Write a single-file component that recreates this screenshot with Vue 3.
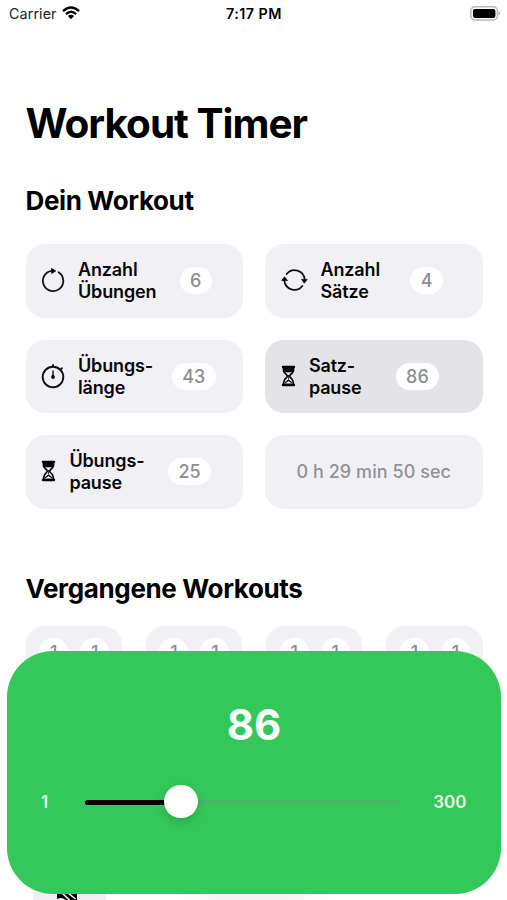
<script setup>
import { ref, computed } from 'vue'

const settings = [
  { id: 'exercises', icon: 'restart', lines: ['Anzahl', 'Übungen'], value: 6 },
  { id: 'sets', icon: 'cycle', lines: ['Anzahl', 'Sätze'], value: 4 },
  { id: 'length', icon: 'stopwatch', lines: ['Übungs-', 'länge'], value: 43 },
  { id: 'set-pause', icon: 'hourglass', lines: ['Satz-', 'pause'], value: 86, active: true },
  { id: 'exercise-pause', icon: 'hourglass', lines: ['Übungs-', 'pause'], value: 25 },
]
const history = [[1, 1], [1, 1], [1, 1], [1, 1]]
const min = 1
const max = 300
const value = ref(86)
const progress = computed(() => ((value.value - min) / (max - min)) * 100)
</script>

<template>
  <div class="screen">
    <header class="status">
      <div class="carrier">
        <span>Carrier</span>
        <svg class="wifi" width="18" height="14" viewBox="0 0 18 14">
          <path d="M1 5.2Q9-2.1 17 5.2M3.9 8.1Q9 3.5 14.1 8.1" fill="none" stroke="#000" stroke-width="2.3" />
          <path d="M5.9 10.1Q9 7.4 12.1 10.1L9 13.3z" />
        </svg>
      </div>
      <span class="time">7:17 PM</span>
      <svg class="battery" width="31" height="15" viewBox="0 0 31 15">
        <rect x=".8" y=".8" width="26.6" height="13.2" rx="4" fill="#fff" stroke="#b9b9b9" stroke-width="1.5" />
        <rect x="3" y="2.9" width="22.4" height="9" rx="2" />
        <path d="M28.6 5q2.8 2.4 0 4.8z" fill="#aaa" />
      </svg>
    </header>

    <main>
      <h1>Workout Timer</h1>
      <h2>Dein Workout</h2>
      <section class="grid">
        <article v-for="s in settings" :key="s.id" class="card" :class="[s.id, { active: s.active }]">
          <svg v-if="s.icon === 'restart'" class="icon" width="24" height="28" viewBox="0 0 24 28">
            <path d="M17.6 6.3A10.2 10.2 0 1 1 10.6 4.8" fill="none" stroke="#111" stroke-width="1.8" stroke-linecap="round" />
            <path d="M10.4 2.2 14.8 5 10.6 7.6z" stroke="#111" stroke-width=".7" stroke-linejoin="round" />
          </svg>
          <svg v-else-if="s.icon === 'cycle'" class="icon" width="27" height="28" viewBox="0 0 27 28">
            <path d="M5.6 8A10.2 10.2 0 0 1 23.7 13.6M21.4 20A10.2 10.2 0 0 1 3.3 14.4" fill="none" stroke="#111" stroke-width="1.8" stroke-linecap="round" />
            <path d="M.8 14.6 3.5 10.8 6.5 14.6zM20.5 13.4H26.2L23.4 17.2z" stroke="#111" stroke-width=".8" stroke-linejoin="round" />
          </svg>
          <svg v-else-if="s.icon === 'stopwatch'" class="icon" width="24" height="28" viewBox="0 0 24 28">
            <g fill="none" stroke="#111" stroke-width="1.9" stroke-linecap="round">
              <circle cx="12" cy="15" r="10.3" />
              <path d="M12 4.5V3M20 7.2 21 6.2" />
              <path d="M12 9V15" stroke-width="1.4" />
            </g>
            <circle cx="12" cy="15" r="1.9" />
          </svg>
          <svg v-else class="icon" width="15" height="22" viewBox="0 0 15 22">
            <path d="M1.9 2H13.1M1.9 20H13.1" stroke="#000" stroke-width="2.3" stroke-linecap="round" />
            <path d="M2.5 2.5V5.2Q2.5 7 5.7 9.8Q6.9 11 5.7 12.3Q2.5 14.9 2.5 19.5H12.5Q12.5 14.9 9.3 12.3Q8.1 11 9.3 9.8Q12.5 7 12.5 5.2V2.5" fill="none" stroke="#000" stroke-width="1.7" />
            <path d="M2.5 3H12.5V5.2L10.5 7.2H4.5L2.5 5.2z" />
            <path d="M7.5 10V14" stroke="#000" stroke-width=".8" />
            <path d="M3.4 19Q4 16.6 7.5 14.2Q11 16.6 11.6 19L10.3 18 7.5 16 4.7 18z" />
          </svg>
          <div class="label"><span v-for="line in s.lines" :key="line">{{ line }}</span></div>
          <span class="badge">{{ s.value }}</span>
        </article>
        <article class="card total">0 h 29 min 50 sec</article>
      </section>

      <h2 class="past-title">Vergangene Workouts</h2>
      <section class="past">
        <article v-for="(entry, i) in history" :key="i">
          <span v-for="(n, j) in entry" :key="j">{{ n }}</span>
        </article>
      </section>
    </main>

    <div class="tab">
      <svg width="20" height="7" viewBox="0 0 20 7">
        <path d="M0 0H20V7H9Q5 3.5 0 6z" />
        <path d="M5 0 12.5 7M11 0 18.5 6" fill="none" stroke="#fff" stroke-width="1.5" />
      </svg>
    </div>
    <div class="tab-line"></div>

    <section class="panel">
      <strong>{{ value }}</strong>
      <div class="slider-row">
        <span class="low">{{ min }}</span>
        <div class="slider">
          <div class="track"><div class="fill" :style="{ width: progress + '%' }"></div></div>
          <div class="thumb" :style="{ left: progress + '%' }"></div>
        </div>
        <span class="high">{{ max }}</span>
      </div>
    </section>
  </div>
</template>

<style>
body { margin: 0; background: #fff; }
</style>

<style scoped>
* { box-sizing: border-box; }
.screen { position: relative; width: 507px; height: 900px; overflow: hidden; background: #fff; color: #000; font-family: Inter, sans-serif; }
.status { display: grid; grid-template-columns: 1fr auto 1fr; align-items: center; height: 26px; padding: 0 6px 0 9px; font-size: 14.3px; }
.carrier { display: flex; align-items: center; gap: 5px; color: #222; letter-spacing: .1px; }
.time { position: relative; left: -1px; font-weight: 600; letter-spacing: .45px; }
.battery { justify-self: end; }
main { padding: 0 24.5px 0 25.5px; }
h1, h2 { margin: 0; white-space: nowrap; }
h1 { margin-top: 73px; font-size: 40.5px; line-height: 50px; font-weight: 700; letter-spacing: -1px; }
h2 { margin-top: 35px; font-size: 26px; line-height: 34px; font-weight: 700; letter-spacing: -.36px; }
.grid { display: grid; grid-template-columns: 1fr 1fr; gap: 22px; margin-top: 26px; }
.card { display: flex; align-items: center; height: 73.5px; padding-left: 15.5px; border-radius: 19px; background: #f1f0f5; }
.card.active { background: #e4e3e8; }
.icon { flex: none; margin-bottom: 1px; }
.label { display: flex; flex-direction: column; flex: none; margin-left: 13px; padding-top: .5px; width: 89.7px; font-size: 18px; line-height: 22px; font-weight: 600; letter-spacing: -.15px; color: #08080a; }
.badge { flex: none; display: grid; place-items: center; height: 27px; margin-bottom: .5px; padding: 0 10.5px; border-radius: 14px; background: #fff; color: #8e8e92; font-size: 18px; font-weight: 500; }
.exercises .label { width: 101.6px; }
.length .label { width: 93.7px; }
.set-pause .label { width: 86.7px; }
.exercise-pause .label { width: 98.5px; }
.set-pause .icon, .exercise-pause .icon { margin-left: .4px; }
.total { justify-content: center; padding: 0 0 .5px; color: #929297; font-size: 18px; font-weight: 550; letter-spacing: .06px; }
.past-title { margin-top: 63.5px; }
.past { display: grid; grid-template-columns: repeat(4, 1fr); gap: 24px; margin-top: 20px; }
.past article { display: flex; justify-content: center; gap: 12px; height: 74px; padding: 12px 0 0 1px; border-radius: 19px; background: #f1f0f5; }
.past span { display: grid; place-items: center; width: 29px; height: 28px; padding-top: 1px; border-radius: 14px; background: #fff; color: #8e8e92; font-size: 18px; font-weight: 500; }
.tab { position: absolute; left: 33px; bottom: 0; display: flex; width: 73px; height: 8px; padding: 1px 0 0 24px; background: #efeff3; }
.tab-line { position: absolute; left: 175px; bottom: 0; width: 160px; height: 7px; background: linear-gradient(90deg, #fff, #f5f5f6 30%, #f5f5f6 70%, #fff); }
.panel { position: absolute; left: 7px; top: 651px; width: 494px; height: 242.5px; padding-top: 49px; border-radius: 46px; background: #34c759; color: #f6fff8; }
.panel strong { display: block; text-align: center; font-size: 42px; line-height: 50px; font-weight: 700; }
.slider-row { display: flex; align-items: center; height: 34px; margin-top: 35px; padding: 0 34.5px 0 34px; font-size: 17px; font-weight: 600; color: #e7faec; }
.low { width: 44px; }
.slider { position: relative; width: 313px; }
.track { height: 5px; margin-top: 1px; border-radius: 3px; background: #45b964; }
.fill { height: 100%; border-radius: 3px 0 0 3px; background: #000; }
.thumb { position: absolute; top: -14.5px; width: 33.5px; height: 33.5px; margin-left: -9.5px; border-radius: 50%; background: #fff; box-shadow: 0 4px 10px rgba(0, 0, 0, .16); }
.high { margin-left: auto; }
</style>
